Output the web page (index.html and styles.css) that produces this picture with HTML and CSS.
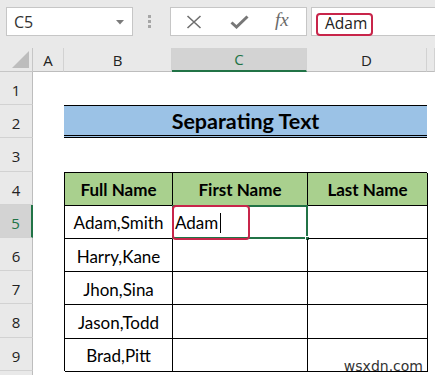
FILE: index.html
```html
<!DOCTYPE html>
<html lang="en">
<head>
    <meta charset="UTF-8">
    <title>Separating Text</title>
    <link rel="stylesheet" href="styles.css">
</head>
<body>
    <div class="toolbar">
        <div class="name-box">
            <span>C5</span>
            <svg class="drop" width="8" height="5" viewBox="0 0 8 5"><path d="M0 0H8L4 4.5Z" fill="#7b7b7b"/></svg>
        </div>
        <div class="grip">
            <svg width="4" height="14" viewBox="0 0 4 14">
                <rect x="0" y="0" width="3" height="3" fill="#a6a6a6"/>
                <rect x="0" y="5" width="3" height="3" fill="#a6a6a6"/>
                <rect x="0" y="10" width="3" height="3" fill="#a6a6a6"/>
            </svg>
        </div>
        <div class="fn-buttons">
            <svg width="16" height="14" viewBox="0 0 16 14"><path d="M1.5 1L14.5 13M14.5 1L1.5 13" stroke="#6f6f6f" stroke-width="1.6" fill="none"/></svg>
            <svg width="19" height="14" viewBox="0 0 19 14"><path d="M1.5 7.5L6.5 12L17.5 1.5" stroke="#777" stroke-width="3" fill="none"/></svg>
            <span class="fx">fx</span>
        </div>
        <div class="formula">
            <span class="formula-value">Adam</span>
        </div>
    </div>

    <div class="sheet">
        <div class="corner"><svg width="17" height="17" viewBox="0 0 17 17"><path d="M17 0V17H0Z" fill="#bdbdbd"/></svg></div>
        <div class="col-head">A</div>
        <div class="col-head">B</div>
        <div class="col-head active">C</div>
        <div class="col-head">D</div>
        <div class="col-head"></div>

        <div class="row-head">1</div>
        <div class="row-head">2</div>
        <div class="row-head">3</div>
        <div class="row-head">4</div>
        <div class="row-head active">5</div>
        <div class="row-head">6</div>
        <div class="row-head">7</div>
        <div class="row-head">8</div>
        <div class="row-head">9</div>
        <div class="row-head"></div>

        <div class="title">Separating Text</div>

        <div class="names">
            <div class="cell head">Full Name</div>
            <div class="cell head">First Name</div>
            <div class="cell head">Last Name</div>

            <div class="cell">Adam,Smith</div>
            <div class="cell editing">
                <span class="typed">Adam</span><span class="caret"></span>
                <div class="select-box"><span class="handle"></span></div>
                <div class="mark"></div>
            </div>
            <div class="cell"></div>

            <div class="cell">Harry,Kane</div>
            <div class="cell"></div>
            <div class="cell"></div>

            <div class="cell">Jhon,Sina</div>
            <div class="cell"></div>
            <div class="cell"></div>

            <div class="cell">Jason,Todd</div>
            <div class="cell"></div>
            <div class="cell"></div>

            <div class="cell">Brad,Pitt</div>
            <div class="cell"></div>
            <div class="cell"></div>
        </div>

        <div class="watermark">wsxdn.com</div>
    </div>
</body>
</html>
```

FILE: styles.css
```css
* {
    box-sizing: border-box;
}

body {
    margin: 0;
    width: 435px;
    height: 375px;
    overflow: hidden;
    background-color: #fff;
    font-family: "Open Sans", "Noto Sans", sans-serif;
}

/* Formula bar */
.toolbar {
    height: 48px;
    background-color: #e9e9e9;
    display: flex;
    align-items: flex-start;
    padding: 7px 0 0 6px;
}

.name-box {
    width: 127px;
    height: 29px;
    background-color: #fff;
    border: 1px solid #c6c6c6;
    display: flex;
    align-items: center;
    justify-content: space-between;
    padding: 0 8px 0 7px;
    font-size: 16px;
    color: #333;
}

.name-box .drop {
    margin-top: 1px;
}

.grip {
    width: 37px;
    height: 29px;
    display: flex;
    align-items: center;
    justify-content: center;
    padding-right: 4px;
}

.fn-buttons {
    width: 137px;
    height: 29px;
    background-color: #fff;
    border: 1px solid #c6c6c6;
    display: flex;
    align-items: center;
    padding-left: 15px;
    gap: 28px;
}

.fn-buttons .fx {
    font-family: "Liberation Serif", serif;
    font-style: italic;
    font-size: 19px;
    color: #6a6a6a;
    margin-left: -2px;
    margin-top: -3px;
}

.formula {
    flex: 1;
    height: 29px;
    margin-left: 4px;
    background-color: #fff;
    border: 1px solid #c6c6c6;
    border-right: none;
    padding: 4px 0 0 4px;
}

.formula-value {
    display: inline-block;
    height: 23px;
    width: 57px;
    border: 2.5px solid #c8254a;
    border-radius: 4px;
    font-size: 15.5px;
    line-height: 17px;
    color: #222;
    padding-left: 7px;
}

/* Worksheet */
.sheet {
    position: relative;
    display: grid;
    grid-template-columns: 33px 31px 108px 135px 120px 8px;
    grid-template-rows: 24px repeat(9, 33.2px) 4px;
}

.corner,
.col-head,
.row-head {
    background-color: #e9e9e9;
    color: #222;
    font-size: 15px;
    display: flex;
    align-items: center;
    justify-content: center;
}

.corner {
    border-right: 1px solid #c6c6c6;
    border-bottom: 1px solid #c6c6c6;
    justify-content: flex-end;
    align-items: flex-end;
    padding: 0 3px 3px 0;
}

.col-head {
    border-right: 1px solid #d2d2d2;
    border-bottom: 1px solid #bdbdbd;
}

.col-head.active {
    background-color: #d3d3d3;
    color: #217346;
    border-bottom: 2px solid #217346;
}

.row-head {
    grid-column: 1;
    border-right: 1px solid #bdbdbd;
    border-bottom: 1px solid #d2d2d2;
    padding-top: 4px;
}

.row-head.active {
    background-color: #d3d3d3;
    color: #217346;
    border-right: 2px solid #217346;
}

.title {
    grid-column: 3 / 6;
    grid-row: 3;
    background-color: #9bc2e6;
    border-top: 1px solid #000;
    border-bottom: 3px double #000;
    display: flex;
    align-items: center;
    justify-content: center;
    font-family: "Lato", "Open Sans", sans-serif;
    font-weight: bold;
    font-size: 21.5px;
    color: #000;
    padding-top: 1px;
}

.names {
    grid-column: 3 / 6;
    grid-row: 5 / 11;
    display: grid;
    grid-template-columns: 108px 135px 120px;
    grid-template-rows: repeat(6, 33.2px);
    border-top: 1px solid #000;
    border-left: 1px solid #000;
    font-family: "Lato", "Open Sans", sans-serif;
    font-size: 17px;
    color: #000;
}

.cell {
    position: relative;
    border-right: 1px solid #000;
    border-bottom: 1px solid #000;
    display: flex;
    align-items: center;
    justify-content: center;
    padding-top: 2px;
}

.cell.head {
    background-color: #a9d08e;
    font-weight: bold;
    font-size: 17px;
}

.cell.editing {
    justify-content: flex-start;
    padding-left: 2px;
}

.caret {
    display: inline-block;
    width: 1px;
    height: 20px;
    background-color: #000;
    margin-left: 2px;
}

.select-box {
    position: absolute;
    left: -1px;
    top: -1px;
    right: -1px;
    bottom: -1px;
    border: 2px solid #217346;
}

.select-box .handle {
    position: absolute;
    right: -4px;
    bottom: -4px;
    width: 5px;
    height: 5px;
    background-color: #217346;
    border: 1px solid #fff;
}

.mark {
    position: absolute;
    left: -1px;
    top: -1px;
    width: 78px;
    height: 35px;
    border: 2.5px solid #c8254a;
    border-radius: 4px;
}

.watermark {
    position: absolute;
    right: 12px;
    bottom: 1px;
    font-family: "DejaVu Sans", sans-serif;
    font-size: 14px;
    line-height: 16px;
    color: #333;
}
```
